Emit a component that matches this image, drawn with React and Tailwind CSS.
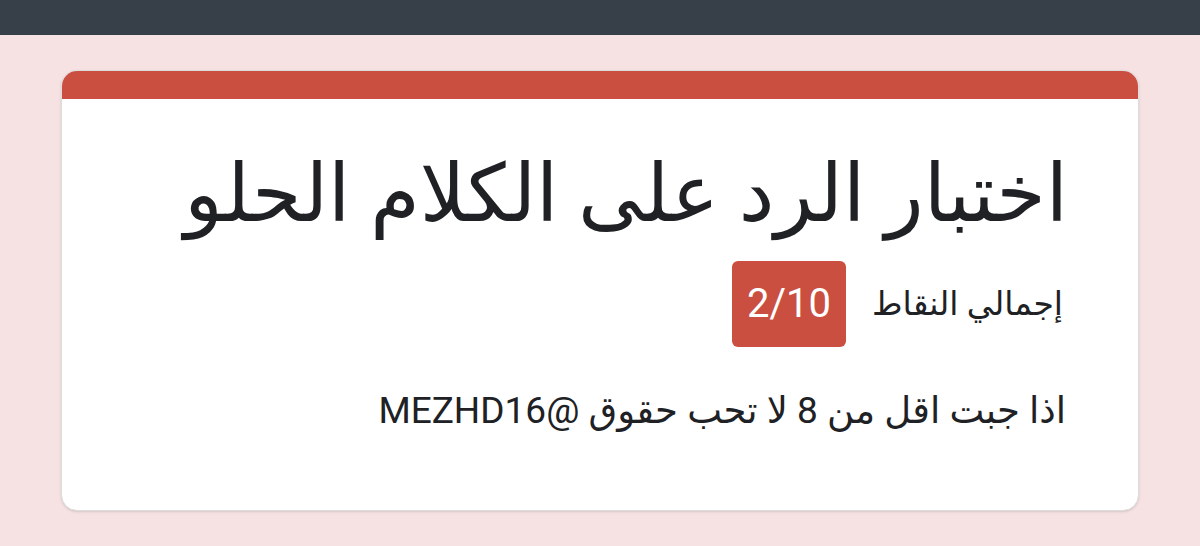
import React from 'react';

const App = () => {
  return (
    <div className="min-h-[546px] bg-[#f6e2e2] font-['Roboto','DejaVu_Sans',sans-serif]" dir="rtl">
      <div className="h-[35px] bg-[#373f48]" />
      <div className="px-[61px] pt-[35px]">
        <div className="bg-white rounded-[16px] border border-[#dcdcdc] overflow-hidden shadow-sm">
          <div className="h-[28px] bg-[#cb4f41]" />
          <div className="pr-[70px] pl-10 pt-[47px] pb-[74px] text-[#202124]">
            <h1 className="text-[80px] leading-[96px]">اختبار الرد على الكلام الحلو</h1>
            <div className="flex items-center gap-[26px] mt-[19px]">
              <span className="text-[33px] pr-[5px]">إجمالي النقاط</span>
              <span className="bg-[#cb4f41] text-white rounded-[6px] w-[114px] h-[86px] flex items-center justify-center text-[40px]" dir="ltr">2/10</span>
            </div>
            <p className="text-[37px] leading-[51px] mt-[38px] pr-[2px]">اذا جبت اقل من 8 لا تحب حقوق @MEZHD16</p>
          </div>
        </div>
      </div>
    </div>
  );
};

export default App;
